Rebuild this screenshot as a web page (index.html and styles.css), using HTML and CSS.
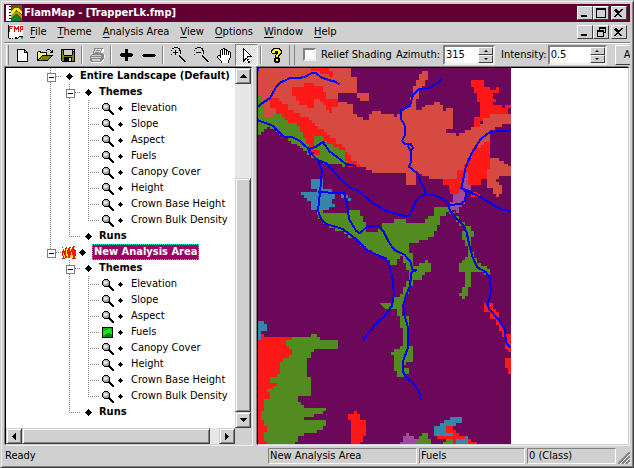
FILE: index.html
```html
<!DOCTYPE html>
<html lang="en">
<head>
<meta charset="utf-8">
<title>FlamMap - [TrapperLk.fmp]</title>
<link rel="stylesheet" href="styles.css">
</head>
<body>
<svg class="defs" aria-hidden="true">
  <symbol id="lens" viewBox="0 0 13 13">
    <path fill="#000" d="M3 1h4v1h1v1h1v4h-1v1h-1v1h-4v-1h-1v-1h-1v-4h1v-1h1z"/>
    <path fill="#a8a8a8" d="M3 2h4v1h1v4h-1v1h-4v-1h-1v-4h1z"/>
    <path fill="#e8e8e8" d="M3 3h3v1h1v1h-1v1h-3z"/>
    <path fill="#000" d="M8 7h1v1h1v1h1v1h1v1h1v2h-2v-1h-1v-1h-1v-1h-1v-1h-1v-1h1z"/>
  </symbol>
  <symbol id="dot-lg" viewBox="0 0 7 7"><path d="M3 0h1v1h1v1h1v1h1v1h-1v1h-1v1h-1v1h-1v-1h-1v-1h-1v-1h-1v-1h1v-1h1v-1h1z"/></symbol>
  <symbol id="dot-sm" viewBox="0 0 5 5"><path d="M2 0h1v1h1v1h1v1h-1v1h-1v1h-1v-1h-1v-1h-1v-1h1v-1h1z"/></symbol>
  <symbol id="i-min" viewBox="0 0 12 10"><path d="M2 7h6v2h-6z"/></symbol>
  <symbol id="i-close" viewBox="0 0 12 10"><path d="M2 1h2v1h1v1h2v-1h1v-1h2v1h-1v1h-1v1h-1v1h-1v1h1v1h1v1h1v1h-2v-1h-1v-1h-2v1h-1v1h-2v-1h1v-1h1v-1h1v-1h-1v-1h-1v-1h-1z"/></symbol>
</svg>
<div class="window">
  <header class="titlebar">
    <svg class="app-icon" viewBox="0 0 16 16"><path fill="#fff" d="M0 0h5v16h-5z"/><path d="M3 1h2v1h-2zM3 4h2v1h-2zM3 7h2v1h-2zM3 10h2v1h-2zM3 13h2v1h-2z"/><path fill="#5a5a10" d="M5 0h11v16h-11z"/><path fill="#ffe818" d="M5 6l3-3h4l3 3h1v3l-3-2-3-2-2 2-3 3z"/><path fill="#a8a010" d="M5 11l3-4h4l4 4v2l-5-4h-2l-4 5z"/><path fill="#108030" d="M5 16v-2l3-4h4l2 3v3z"/></svg>
    <h1>FlamMap - [TrapperLk.fmp]</h1>
    <div class="caps">
      <button class="cap" aria-label="Minimize"><svg><use href="#i-min"/></svg></button>
      <button class="cap" aria-label="Maximize"><svg viewBox="0 0 12 10"><path d="M1 0h10v10h-10zM2 2v7h8v-7z" fill-rule="evenodd"/></svg></button>
      <button class="cap apart" aria-label="Close"><svg><use href="#i-close"/></svg></button>
    </div>
  </header>

  <div class="menubar">
    <svg class="doc-icon" viewBox="0 0 16 16"><path fill="#fff" d="M1 1h14v11l-3 1-3 2-3-1-3 1-2-1z"/><path d="M0 1h1v13h-1zM1 14h2v1h-2zM3 15h2v-1h2v1h3v-1h-1v-1h-2v1h-2zM10 13h1v-1h4v1h-4v1h-1z"/><path fill="#ef1010" d="M1 2h4v1h-3v1h2v1h-2v3h-1zM6 2h1v1h1v1h1v-1h1v-1h1v6h-1v-3h-1v1h-1v-1h-1v3h-1zM12 2h3v4h-2v2h-1zM13 3v2h1v-2z"/><path fill="#00a0a0" d="M13 13h2v2h-2z"/></svg>
    <nav>
      <button><u>F</u>ile</button>
      <button><u>T</u>heme</button>
      <button><u>A</u>nalysis Area</button>
      <button><u>V</u>iew</button>
      <button><u>O</u>ptions</button>
      <button><u>W</u>indow</button>
      <button><u>H</u>elp</button>
    </nav>
    <div class="caps">
      <button class="cap" aria-label="Minimize document"><svg><use href="#i-min"/></svg></button>
      <button class="cap" aria-label="Restore document"><svg viewBox="0 0 12 10"><path fill-rule="evenodd" d="M4 0h7v6h-2v4h-7v-7h2zM5 2v1h4v2h1v-3zM3 5v4h5v-4z"/></svg></button>
      <button class="cap apart" aria-label="Close document"><svg><use href="#i-close"/></svg></button>
    </div>
  </div>

  <div class="toolbar">
    <span class="grip"></span>
    <button class="tool" aria-label="New"><svg viewBox="0 0 16 16"><path d="M3 2h8v1h1v1h1v1h1v10h-11z"/><path fill="#fff" d="M4 3h6v3h3v8h-9z"/><path fill="#d0d0d0" d="M11 4h1v1h-1z"/></svg></button>
    <button class="tool" aria-label="Open"><svg viewBox="0 0 16 16"><path d="M10 2h3v1h1v1h1v-1h1v3h-3v-1h1v-1h-1v-1h-3v1h-1v-1h1zM1 4h3v1h6v3h6v1h-1v1h-1v1h-1v1h-1v1h-1v1h-11v-9h1z"/><path fill="#ffff70" d="M1 5h2v1h6v2h-4v1h-1v1h-1v1h-1v1h-1z"/><path fill="#808000" d="M5 9h9v1h-1v1h-1v1h-1v1h-9v-1h1v-1h1v-1h1z"/></svg></button>
    <button class="tool" aria-label="Save"><svg viewBox="0 0 16 16"><path d="M1 2h14v13h-13v-1h-1z"/><path fill="#808000" d="M2 3h1v5h1v1h8v-1h1v-3h1v9h-2v-4h-8v4h-2z"/><path fill="#d0d0d0" d="M4 3h8v5h-8zM13 3h1v1h-1zM9 11h2v3h-2z"/></svg></button>
    <span class="rule"></span>
    <button class="tool" aria-label="Print"><svg viewBox="0 0 16 16"><path fill="#fff" d="M6 2h9v1l-1 4h1v6l-3 3h-10v-1h11v-2l3-3v-2z"/><path fill="#888" fill-rule="evenodd" d="M5 1h9v1h-1v2h-1v2h2v1h1v5h-1v1h-1v1h-1v1h-10v-1h-1v-5h1v-1h1v-1h1v-3h1zM6 2v2h-1v2h6v-2h1v-2zM3 8v1h9v-1zM2 10v1h10v-1zM3 12v2h8v-2z"/><path fill="#888" d="M7 3h4v1h-4zM6 5h4v1h-4z"/></svg></button>
    <span class="rule"></span>
    <button class="tool" aria-label="Add"><svg viewBox="0 0 16 16"><path d="M7 2h3v4h4v1h1v2h-1v1h-4v4h-3v-4h-4v-1h-1v-2h1v-1h4z"/></svg></button>
    <button class="tool" aria-label="Remove"><svg viewBox="0 0 16 16"><path d="M2 7h12v1h1v1h-1v1h-12v-1h-1v-1h1z"/></svg></button>
    <span class="rule"></span>
    <button class="tool" aria-label="Zoom in"><svg viewBox="0 0 16 16"><path fill-rule="evenodd" d="M4 0h4v1h2v2h1v4h-1v2h1v1h1v1h1v1h1v1h1v1h1v1h-2v-1h-1v-1h-1v-1h-1v-1h-1v-1h-1v-1h-1v1h-4v-1h-2v-2h-1v-4h1v-2h2zM4 1v1h-2v2h-1v4h1v1h2v1h4v-1h1v-1h1v-4h-1v-2h-1v-1z"/><path d="M5 3h1v2h2v1h-2v2h-1v-2h-2v-1h2zM12 12h2v1h1v2h-1v-1h-1v-1h-1z"/></svg></button>
    <button class="tool" aria-label="Zoom out"><svg viewBox="0 0 16 16"><path fill-rule="evenodd" d="M4 0h4v1h2v2h1v4h-1v2h1v1h1v1h1v1h1v1h1v1h1v1h-2v-1h-1v-1h-1v-1h-1v-1h-1v-1h-1v-1h-1v1h-4v-1h-2v-2h-1v-4h1v-2h2zM4 1v1h-2v2h-1v4h1v1h2v1h4v-1h1v-1h1v-4h-1v-2h-1v-1z"/><path d="M3 5h5v1h-5zM12 12h2v1h1v2h-1v-1h-1v-1h-1z"/></svg></button>
    <button class="tool" aria-label="Pan"><svg viewBox="0 0 16 16"><path fill="#fff" d="M5 3h2v-1h2v1h2v2h2v1h1v6l-2 4h-6l-4-5v-1h2l1 1z"/><path d="M7 1h2v1h-2zM5 2h2v1h-2zM9 2h2v1h-2zM4 3h1v6h-1zM6 3h1v5h-1zM8 2h1v6h-1zM10 3h1v5h-1zM11 3h1v1h-1zM12 4h1v4h-1zM13 4h1v1h-1zM14 5h1v6h-1zM13 11h1v2h-1zM12 13h1v3h-1zM2 8h2v1h-2zM1 9h1v2h-1zM4 9h1v2h-1zM2 11h1v1h-1zM3 12h1v1h-1zM4 13h1v1h-1zM5 14h1v2h-1z"/></svg></button>
    <button class="tool pressed" aria-label="Select" aria-pressed="true"><svg viewBox="0 0 16 16"><path d="M4 1h1v1h1v1h1v1h1v1h1v1h1v1h1v1h1v1h1v1h-4v2h1v2h1v2h-2v-2h-1v-2h-1v1h-1v1h-1v1h-1z"/><path fill="#fff" d="M5 3h1v1h1v1h1v1h1v1h1v1h1v1h-3v2h1v2h1v1h-1v-2h-1v-1h-2v1h-1z"/></svg></button>
    <span class="rule"></span>
    <button class="tool" aria-label="Help"><svg viewBox="0 0 16 16"><path d="M5 1h7v1h1v1h1v4h-1v1h-1v1h-1v2h1v4h-1v1h-4v-1h-1v-4h1v-3h1v-1h-4v-1h-1v-3h1v-1h1z"/><path fill="#ffff20" d="M6 2h5v1h1v1h1v2h-1v1h-1v1h-1v2h-2v-2h1v-1h1v-3h-3v2h-3v-2h1v-1h1zM8 12h2v2h-2z"/></svg></button>
    <span class="rule wide"></span>
    <div class="options">
      <label class="check"><input type="checkbox">Relief Shading</label>
      <label for="azimuth">Azimuth:</label>
      <span class="spin"><input id="azimuth" type="text" value="315"><span><button class="up" aria-label="Increase azimuth"></button><button class="down" aria-label="Decrease azimuth"></button></span></span>
      <label for="intensity">Intensity:</label>
      <span class="spin wide"><input id="intensity" type="text" value="0.5"><span><button class="up" aria-label="Increase intensity"></button><button class="down" aria-label="Decrease intensity"></button></span></span>
      <button class="apply">Apply</button>
    </div>
  </div>

  <main>
    <section class="pane tree">
      <div class="tree-row">
        <ul class="root">
          <li><div class="row bold"><span class="twig box"></span><svg class="dl"><use href="#dot-lg"/></svg><span>Entire Landscape (Default)</span></div>
            <ul>
              <li><div class="row bold"><span class="twig box"></span><svg class="dl"><use href="#dot-lg"/></svg><span>Themes</span></div>
                <ul>
                  <li><div class="row"><span class="twig"></span><svg class="lens"><use href="#lens"/></svg><svg class="ds"><use href="#dot-sm"/></svg><span>Elevation</span></div></li>
                  <li><div class="row"><span class="twig"></span><svg class="lens"><use href="#lens"/></svg><svg class="ds"><use href="#dot-sm"/></svg><span>Slope</span></div></li>
                  <li><div class="row"><span class="twig"></span><svg class="lens"><use href="#lens"/></svg><svg class="ds"><use href="#dot-sm"/></svg><span>Aspect</span></div></li>
                  <li><div class="row"><span class="twig"></span><svg class="lens"><use href="#lens"/></svg><svg class="ds"><use href="#dot-sm"/></svg><span>Fuels</span></div></li>
                  <li><div class="row"><span class="twig"></span><svg class="lens"><use href="#lens"/></svg><svg class="ds"><use href="#dot-sm"/></svg><span>Canopy Cover</span></div></li>
                  <li><div class="row"><span class="twig"></span><svg class="lens"><use href="#lens"/></svg><svg class="ds"><use href="#dot-sm"/></svg><span>Height</span></div></li>
                  <li><div class="row"><span class="twig"></span><svg class="lens"><use href="#lens"/></svg><svg class="ds"><use href="#dot-sm"/></svg><span>Crown Base Height</span></div></li>
                  <li><div class="row"><span class="twig"></span><svg class="lens"><use href="#lens"/></svg><svg class="ds"><use href="#dot-sm"/></svg><span>Crown Bulk Density</span></div></li>
                </ul>
              </li>
              <li><div class="row bold"><span class="twig"></span><svg class="dl"><use href="#dot-lg"/></svg><span>Runs</span></div></li>
            </ul>
          </li>
          <li><div class="row bold"><span class="twig box"></span><svg class="flame" viewBox="0 0 14 13"><path fill="#ffe000" d="M1 4h12v8h-12z"/><path fill="#f01800" d="M0 1h1v2h1v2h1v-3h1v-1h1v2h-1v3h1v-2h1v-2h1v-1h2v1h-1v3h1v-2h1v-2h1v-1h2v1h-1v2h1v1h1v6h-1v2h-2v-3h-1v-3h-1v3h-1v3h-2v-4h-1v-2h-1v4h1v2h-2v-3h-1v-2h-1v3h1v2h-1v-2h-1v-5h1v-3h-1z"/><path d="M0 12h3v1h-3zM10 12h4v1h-4z" fill="#c03000"/></svg><svg class="dl near"><use href="#dot-lg"/></svg><span class="selected">New Analysis Area</span></div>
            <ul>
              <li><div class="row bold"><span class="twig box"></span><svg class="dl"><use href="#dot-lg"/></svg><span>Themes</span></div>
                <ul>
                  <li><div class="row"><span class="twig"></span><svg class="lens"><use href="#lens"/></svg><svg class="ds"><use href="#dot-sm"/></svg><span>Elevation</span></div></li>
                  <li><div class="row"><span class="twig"></span><svg class="lens"><use href="#lens"/></svg><svg class="ds"><use href="#dot-sm"/></svg><span>Slope</span></div></li>
                  <li><div class="row"><span class="twig"></span><svg class="lens"><use href="#lens"/></svg><svg class="ds"><use href="#dot-sm"/></svg><span>Aspect</span></div></li>
                  <li><div class="row"><span class="twig"></span><svg class="lens" viewBox="0 0 13 13"><path d="M1 1h11v11h-11z"/><path fill="#18b018" d="M2 2h9v9h-9z"/><path fill="#10f010" d="M2 5h2v-1h2v-1h4v2h1v3h-2v-1h-3v1h-2v1h-2z"/><path fill="#088010" d="M4 9h1v-1h1v-1h3v1h1v1h1v2h-7z"/></svg><svg class="ds"><use href="#dot-sm"/></svg><span>Fuels</span></div></li>
                  <li><div class="row"><span class="twig"></span><svg class="lens"><use href="#lens"/></svg><svg class="ds"><use href="#dot-sm"/></svg><span>Canopy Cover</span></div></li>
                  <li><div class="row"><span class="twig"></span><svg class="lens"><use href="#lens"/></svg><svg class="ds"><use href="#dot-sm"/></svg><span>Height</span></div></li>
                  <li><div class="row"><span class="twig"></span><svg class="lens"><use href="#lens"/></svg><svg class="ds"><use href="#dot-sm"/></svg><span>Crown Base Height</span></div></li>
                  <li><div class="row"><span class="twig"></span><svg class="lens"><use href="#lens"/></svg><svg class="ds"><use href="#dot-sm"/></svg><span>Crown Bulk Density</span></div></li>
                </ul>
              </li>
              <li><div class="row bold"><span class="twig"></span><svg class="dl"><use href="#dot-lg"/></svg><span>Runs</span></div></li>
            </ul>
          </li>
        </ul>
        <div class="vscroll"><button class="sb" aria-label="Scroll up"><svg viewBox="0 0 7 4"><path d="M3 0h1v1h1v1h1v1h1v1h-7v-1h1v-1h1v-1h1z"/></svg></button><div class="gap"></div><div class="thumb"></div><button class="sb" aria-label="Scroll down"><svg viewBox="0 0 7 4"><path d="M0 0h7v1h-1v1h-1v1h-1v1h-1v-1h-1v-1h-1v-1h-1z"/></svg></button></div>
      </div>
      <div class="hscroll"><button class="sb" aria-label="Scroll left"><svg class="side" viewBox="0 0 4 7"><path d="M4 0v7h-1v-1h-1v-1h-1v-1h-1v-1h1v-1h1v-1h1v-1z"/></svg></button><div class="thumb"></div><div class="gap"></div><button class="sb" aria-label="Scroll right"><svg class="side" viewBox="0 0 4 7"><path d="M0 0h1v1h1v1h1v1h1v1h-1v1h-1v1h-1v1h-1z"/></svg></button></div>
    </section>

    <section class="pane map">
      <svg viewBox="6 12 759 1128" role="img" aria-label="Fuels map">
        <path fill="#6b0859" d="M6 12h759v1128h-759z"/>
        <path fill="#d64a42" d="M6 12H285V39H303V87H339V111H312V102H303V87H246V114H273V120H291V150H303V159H321V168H339V150H348V141H375V150H414V159H423V150H432V141H444V129H462V100H471V66H480V48H489V30H498V21H516V48H507V66H498V78H489V105H480V138H498V129H507V123H534V114H552V123H561V141H570V132H591V195H570V207H600V216H609V207H627V198H645V189H669V180H681V162H702V150H765V180H738V189H717V198H702V282H729V291H744V300H756V306H765V336H729V345H720V354H729V363H738V390H729V399H720V390H711V372H693V345H519V336H498V330H480V363H450V327H348V318H330V309H312V309L300 306L267 291L180 264L132 222L78 159H24V150H6Z"/>
        <path fill="#ff1818" d="M165 12H219V21H231V39H219V30H192V21H165ZM108 69H144V57H174V66H201V84H210V105H219V114V105H246V129H228V147H219V138H210V123H201V114H192V105H174V132H153V123H129V111H120V96H108ZM42 102H69V111H78V120H96V138H114V147H132V159H159V168H168V177H177V186H186V195H204V204H213V213H222V222H240V240H258V249H267V264H276V273H285V291H303V300H312V309H276V300H267V282H249V258H231V249H213V231H204V222H174V258H192V273H174V264H165V255H150V240H141V222H132V204H123V186H105V177H96V168H87V159H78V150H60V132H42ZM645 48H684V69H702V78H720V69H729V87H711V105H720V114H711V123H738V132H747V123H765V132H756V150H702V162H681V171H672V189H654V159H672V114H663V87H654V69H645ZM675 243H684V234H702V315H693V345H675V363H639V378H609V390H588V378H579V363H561V345H603V318H624V300H633V282H648V252H675ZM582 378H609V390H582ZM645 384H663V390H672V399H645ZM684 717H711V735H720V744H729V774H738V792H747V810H765V864H756V855H747V819H738V801H729V783H720V765H702V744H684ZM747 882H765V930H756V912H747Z"/>
        <path fill="#528c21" d="M6 96H15V120H24V159H51V150H78V159H87V168H96V177H123V186H132V204H141V222H150V240H159V273H153V261H141V252H132V246H123V240H105V231H96V222H78V213H69V204H60V195H42V189H33V195H24V204H15V213H6ZM174 216H201V222H204V231H213V240H231V249H249V258H267V291H276V300H267V309H258V300H201V291H183V282H165V270H174V273H192V258H174ZM183 438H201V447H276V438H312V456H321V474H330V504H366V492H378V477H414V465H450V477H507V465H516V456H534V429H588V444H597V450H579V444H570V456H552V483H543V501H534V520H516V528H489V537H459V567H471V606H490V597H507V588H516V597H525V624H507V633H498V648H471V666H459V690H447V720H438V756H459V846H471V894H450V903H441V912H459V930H447V938H423V921H414V873H405V864H414V855H432V846H441V792H432V756H423V735H387V717H414V699H432V690H441V669H450V651H459V618H450V597H441V576H432V585H423V603H402V588H393V579H384V576H360V567H348V558H330V546H312V534H303V522H276V510H264V501H238V492H219V480H201V465H186ZM600 456H609V474H627V486H645V501H654V520H645V564H654V582H663V597H675V606H693V615H702V633H684V623H645V669H636V696H627V705H618V696H609V687H618V669H627V623H609V597H618V588H627V579H636V546H627V528H618V501H627V486H609V474H600ZM372 717H408V735H387Z"/>
        <path fill="#a04a9c" d="M624 324H636V363H645V378H633V399H627V420H618V429H609V446H600V438H582V414H591V390H609V378H618V342H624ZM432 1134H441V1116H450V1107H459V1116H474V1125H489V1140H432Z"/>
        <path fill="#3984ad" d="M165 345H201V375H228V384H267V393H276V402H285V411H276V402H255V388H238V406H228V420H238V430H219V438H165V411H153V402H144V393H135V384H183V375H165ZM6 771H24V780H33V801H15V828H6ZM534 1086H552V1077H564V1068H582V1059H618V1077H600V1086H570V1107H591V1116H534ZM600 1125H627V1116H636V1140H600Z"/>
        <path fill="#ff1818" d="M6 828H15V810H24V819H108V1140H6ZM276 1050H294V1041H303V1050H312V1068H330V1116H321V1134H312V1140H285V1068H276ZM570 1086H591V1098H600V1107H609V1116H627V1125H600V1140H591V1125H543V1116H591V1107H570ZM636 1125H645V1134H663V1140H636Z"/>
        <path fill="#528c21" d="M108 819H165V810H183V819H192V828H246V855H174V864H165V882H153V939H165V996H126V1014H135V1023H144V1032H210V1041H201V1050H174V1059H144V1068H210V1086H201V1098H183V1107H144V1116H126V1134H117V1140H33V1131H24V1104H33V1086H24V1068H15V1041H24V1005H42V984H33V975H51V966H63V957H42V939H63V930H72V894H81V882H99V873H108V855H99V846H90V828H108ZM561 1134H570V1125H591V1140H561ZM480 1131H489V1116H498V1107H516V1125H525V1140H480Z"/>
        <g fill="none" stroke="#00f" stroke-width="6">
          <path d="M6 12v8M6 129L15 120L42 102L60 70L75 55L100 43L144 40L168 27H180L195 40L225 50L235 52L250 61"/>
          <path d="M6 169L50 185L84 220L105 218L130 230L155 252L160 264L185 288L210 298L228 315L250 342L280 370L305 380L330 400L355 420L390 440L414 447L441 455H459L468 440L480 410L495 396L516 392L540 395L560 405L576 420L582 440L600 462L622 483L632 505L640 545L650 580L664 610L690 625L702 640L705 690L694 720L700 735L730 770L745 795L752 840L765 851"/>
          <path d="M155 256L180 248L201 234L220 262L245 280L270 300L300 306"/>
          <path d="M185 288L198 320L192 384L186 440L195 465L210 480L260 495L300 525L335 560L390 585L400 604L410 645L414 690L408 725L384 758L360 780L324 822V830"/>
          <path d="M186 384L264 388L273 420L279 465L300 500L312 508L333 488L366 486L384 505L396 530L415 558L445 572L463 592L470 618H482L466 625L462 665L448 700L442 725L446 756L456 790V850L440 895V920L450 940L474 960L490 985L495 1008"/>
          <path d="M555 43V49L544 58L519 72L489 75L471 92L462 126L435 138V165L447 185V212L439 230L446 240H464L471 252L464 262L456 245M464 258L466 290L459 308L489 332L494 355L506 375V395"/>
          <path d="M765 199L702 204L674 225L646 270L629 310L622 345L616 372L628 378L649 386M628 378L674 400L734 436L765 441M632 376L627 410L614 420L579 423M616 372L634 388"/>
        </g>
      </svg>
    </section>
  </main>

  <footer>
    <span class="ready">Ready</span>
    <span class="cell area">New Analysis Area</span>
    <span class="cell theme">Fuels</span>
    <span class="cell class">0 (Class)</span>
    <svg class="size-grip" viewBox="0 0 12 12"><path d="M0 12L12 0M4 12L12 4M8 12L12 8" stroke="#808080" stroke-width="2"/><path d="M2 12L12 2M6 12L12 6M10 12L12 10" stroke="#fff"/></svg>
  </footer>
</div>
</body>
</html>
```
FILE: styles.css
```css
:root {
  --face: #d0d0d0;
  --light: #efefef;
  --shade: #808080;
  --dark: #404040;
}

* { box-sizing: border-box; }

html, body { height: 100%; margin: 0; }

body {
  background: var(--face);
  color: #000;
  font: 11px/16px "DejaVu Sans Condensed", "DejaVu Sans", sans-serif;
  font-stretch: condensed;
}

button, input { font: inherit; color: inherit; }

button {
  padding: 0;
  border: 0;
  background: none;
}

svg { display: block; flex: none; shape-rendering: crispEdges; }
.defs { position: absolute; width: 0; height: 0; }

.window {
  display: flex;
  flex-direction: column;
  height: 100vh;
  padding: 3px;
  border: 1px solid;
  border-color: var(--face) var(--dark) var(--dark) var(--face);
  box-shadow: inset 1px 1px var(--light), inset -1px -1px var(--shade);
}

/* Title and menu */
.titlebar, .menubar {
  display: flex;
  align-items: center;
  flex: none;
  padding-right: 3px;
}

.titlebar {
  height: 18px;
  padding-left: 2px;
  background: #630031;
  color: #fff;
}

.titlebar h1 {
  flex: 1;
  margin: 0 0 0 2px;
  font-size: 11px;
  font-weight: bold;
}

.app-icon, .doc-icon { width: 16px; height: 16px; }

.menubar { height: 20px; padding-left: 4px; }
.menubar nav { display: flex; flex: 1; gap: 11px; margin-left: 6px; }
.menubar u { text-underline-offset: 2px; }

.caps { display: flex; }

.cap {
  width: 16px;
  height: 14px;
  padding: 1px;
  background: var(--face);
  border: 1px solid;
  border-color: #fff var(--dark) var(--dark) #fff;
}
.cap svg { width: 12px; height: 10px; }
.cap.apart { margin-left: 2px; }

/* Toolbar */
.toolbar {
  display: flex;
  align-items: center;
  flex: none;
  height: 24px;
  border-top: 1px solid var(--shade);
  box-shadow: inset 0 1px #fff;
  overflow: hidden;
}

.grip {
  flex: none;
  width: 3px;
  height: 20px;
  margin: 0 1px 0 2px;
  border-right: 1px solid var(--shade);
  border-left: 1px solid #fff;
}

.tool {
  display: grid;
  place-items: center;
  flex: none;
  width: 23px;
  height: 22px;
}
.tool svg { width: 16px; height: 16px; }

.pressed {
  border: 1px solid;
  border-color: var(--shade) #fff #fff var(--shade);
  background: repeating-conic-gradient(#fff 0 25%, var(--face) 0 50%) 0 0 / 2px 2px;
}

.rule {
  flex: none;
  width: 2px;
  height: 18px;
  margin: 0 2px;
  border-left: 1px solid var(--shade);
  border-right: 1px solid #fff;
}
.rule.wide { width: 6px; height: 20px; border-right-color: var(--shade); }

.options {
  display: flex;
  align-items: center;
  flex: none;
  margin-left: 6px;
}

.check { display: flex; align-items: center; gap: 5px; margin-right: 4px; }
.check input {
  appearance: none;
  width: 13px;
  height: 13px;
  margin: 0;
  background: #fff;
  border: 2px solid;
  border-color: var(--shade) var(--light) var(--light) var(--shade);
}

.spin {
  display: flex;
  width: 52px;
  height: 20px;
  margin: 0 6px 0 3px;
  background: #fff;
  border: 2px solid;
  border-color: var(--shade) var(--light) var(--light) var(--shade);
}
.spin.wide { width: 59px; margin: 0 8px 0 1px; }
.spin input {
  flex: 1;
  min-width: 0;
  padding: 0 1px;
  border: 0;
  background: none;
  outline: 0;
}
.spin > span { display: grid; width: 15px; }
.spin button {
  display: grid;
  place-items: center;
  background: var(--face);
  border: 1px solid;
  border-color: #fff var(--dark) var(--dark) #fff;
}
.spin button::before { content: ""; border: 2px solid transparent; }
.spin .up::before { border-top: 0; border-bottom-color: #000; }
.spin .down::before { border-bottom: 0; border-top-color: #000; }

.apply {
  height: 20px;
  padding: 0 8px;
  border: 1px solid;
  border-color: #fff var(--dark) var(--dark) #fff;
}

/* Panes */
main { display: flex; flex: 1; gap: 3px; min-height: 0; }

.pane {
  min-width: 0;
  margin: 1px;
  background: #fff;
  border: 1px solid;
  border-color: #000 var(--face) var(--face) #000;
  box-shadow: -1px -1px var(--shade), 1px 1px var(--light);
  overflow: hidden;
}

.tree { display: flex; flex-direction: column; flex: 0 0 247px; }
.tree-row { display: flex; flex: 1; min-height: 0; }

.tree ul { margin: 0; padding: 0; list-style: none; }
.tree .root { flex: 1; min-width: 0; padding-left: 40px; }
.tree li { position: relative; }
.tree li li { margin-left: 19px; }

.tree li::before {
  content: "";
  position: absolute;
  top: 0;
  left: 4px;
  width: 1px;
  height: 100%;
  background: repeating-linear-gradient(var(--shade) 0 1px, transparent 1px 2px);
}
.tree li:last-child::before { height: 8px; }

.row { display: flex; align-items: center; height: 16px; white-space: nowrap; }
.row.bold { font-weight: bold; }

.twig { position: relative; flex: none; width: 16px; height: 16px; }
.twig::before {
  content: "";
  position: absolute;
  top: 8px;
  left: 4px;
  right: 0;
  height: 1px;
  background: repeating-linear-gradient(90deg, var(--shade) 0 1px, transparent 1px 2px);
}
.twig.box::after {
  content: "";
  position: absolute;
  top: 5px;
  left: 1px;
  width: 7px;
  height: 7px;
  border: 1px solid var(--shade);
  background: linear-gradient(#000, #000) center / 5px 1px no-repeat #fff;
}

.dl { width: 7px; height: 7px; margin: 0 7px 0 4px; }
.dl.near { margin: 0 6px 0 3px; }
.ds { width: 5px; height: 5px; margin: 0 8px 0 4px; }
.lens { width: 13px; height: 13px; margin-left: 1px; }
.flame { width: 14px; height: 13px; }

.selected {
  height: 16px;
  padding: 0 1px;
  line-height: 14px;
  color: #fff;
  background: #9c0063;
  border: 1px dotted #00ff9c;
}

.vscroll, .hscroll { display: flex; flex: none; background: #e7e7e7; }
.vscroll { flex-direction: column; width: 16px; }
.hscroll { height: 16px; margin-right: 16px; box-shadow: 16px 0 var(--face); }

.sb, .thumb {
  background: var(--face);
  border: 1px solid;
  border-color: var(--face) var(--dark) var(--dark) var(--face);
  box-shadow: inset 1px 1px #fff, inset -1px -1px var(--shade);
}
.sb { display: grid; place-items: center; flex: none; width: 16px; height: 16px; }
.sb svg { width: 7px; height: 4px; }
.sb .side { width: 4px; height: 7px; }
.vscroll .gap { flex: 95; }
.vscroll .thumb { flex: 233; }
.hscroll .thumb { flex: 188; }
.hscroll .gap { flex: 9; }

.map { flex: 1; }
.map svg { width: 253px; height: 376px; }

/* Status bar */
footer {
  display: flex;
  align-items: center;
  flex: none;
  gap: 2px;
  height: 18px;
  padding-top: 2px;
}
.ready { flex: 1; padding-left: 1px; }
.cell {
  height: 16px;
  padding-left: 1px;
  line-height: 14px;
  border: 1px solid;
  border-color: var(--shade) #fff #fff var(--shade);
}
.area { width: 149px; }
.theme { width: 106px; }
.class { width: 89px; }
.size-grip { width: 12px; height: 12px; align-self: end; shape-rendering: auto; }
```
